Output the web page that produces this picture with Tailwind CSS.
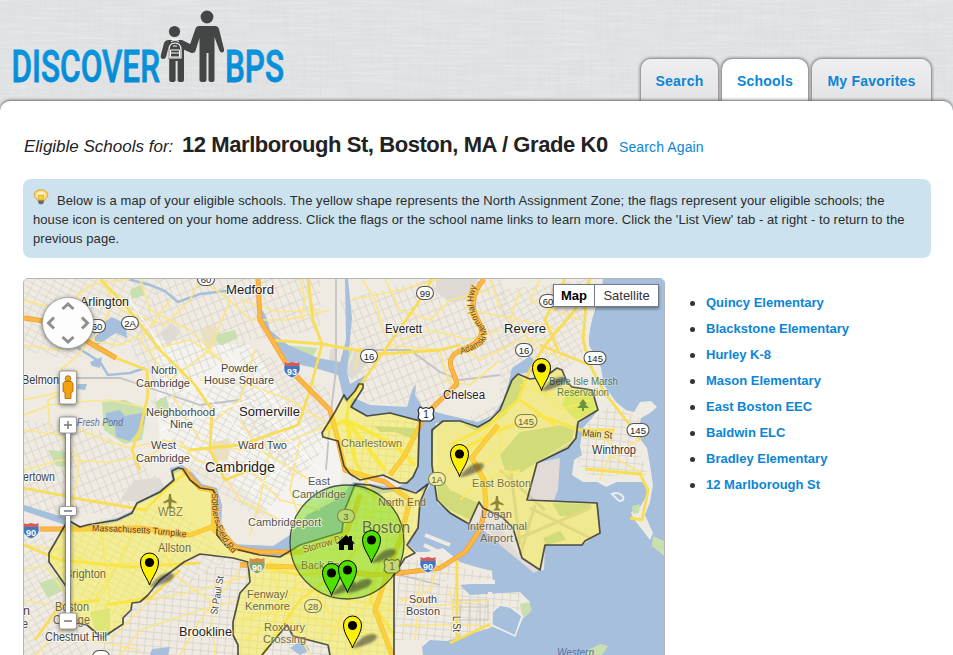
<!DOCTYPE html>
<html lang="en">
<head>
<meta charset="utf-8">
<title>Discover BPS</title>
<script src="https://cdn.jsdelivr.net/npm/@tailwindcss/browser@4"></script>
</head>
<body class="h-[655px] w-[953px] overflow-hidden bg-[#e0e1e3] font-['Liberation_Sans',Arial,sans-serif] text-[#222]">
<div class="relative h-[655px] overflow-hidden">
  <svg class="absolute inset-0" width="953" height="120">
    <defs>
      <filter id="lh" x="0" y="0" width="100%" height="100%"><feTurbulence type="fractalNoise" baseFrequency="0.02 0.4" numOctaves="2" seed="4"/><feColorMatrix values="0 0 0 0 1  0 0 0 0 1  0 0 0 0 1  1.6 0 0 0 -0.65"/></filter>
      <filter id="lv" x="0" y="0" width="100%" height="100%"><feTurbulence type="fractalNoise" baseFrequency="0.4 0.02" numOctaves="2" seed="9"/><feColorMatrix values="0 0 0 0 .68  0 0 0 0 .69  0 0 0 0 .71  1.4 0 0 0 -0.6"/></filter>
    </defs>
    <rect width="953" height="120" fill="#e0e1e3"/>
    <rect width="953" height="120" filter="url(#lh)" opacity=".35"/>
    <rect width="953" height="120" filter="url(#lv)" opacity=".5"/>
  </svg>

  <header class="relative flex h-[101px] items-end justify-between pr-[22px]">
    <svg class="self-start" width="300" height="98" viewBox="0 0 300 98">
      <defs><linearGradient id="lg" x1="0" y1="0" x2="0" y2="1"><stop offset="0" stop-color="#0a9ae0"/><stop offset="1" stop-color="#0386d2"/></linearGradient></defs>
      <g font-family="Roboto, sans-serif" font-weight="500" font-size="44.500" fill="url(#lg)" stroke="#0590da" stroke-width=".8">
        <text x="11.5" y="81.700" textLength="148.500" lengthAdjust="spacingAndGlyphs">DISCOVER</text>
        <text x="225" y="81.700" textLength="59" lengthAdjust="spacingAndGlyphs">BPS</text>
      </g>
      <g fill="#444645">
        <circle cx="207" cy="17" r="6.400"/>
        <path d="M199 26h16q3 0 4 3l5 20q.6 3-1.800 3.500-2 .3-3-2.500L214.500 37V80q0 2-3 2t-3-2V53h-2V80q0 2-3.500 2T199.500 80V38l-4 13q-1 2.500-4 2L181 48.500V43.500l8.500 2.500L195 30q1-4 4-4z"/>
        <circle cx="174.500" cy="31.500" r="5.600"/>
        <path d="M168 40h14l10 5v6L184 47.500V80q0 2-3.200 2t-3.200-2V61h-2V80q0 2-3.200 2t-3.200-2V59h-1V48.500l-2 8q-1 3-3.500 2.500t-1.800-4L164 43q1.500-3 4-3z"/>
      </g>
      <path d="M171 38.500l8 3m0-3l-8 3M169 58V50q0-7 6-7t6 7v8z" fill="#444645" stroke="#fff" stroke-width="1.200"/>
      <path d="M170.500 50h9v7h-9zM170.500 53h9M173 46h4" fill="none" stroke="#fff" stroke-width="1"/>
    </svg>
    <nav class="flex gap-[4px] text-[14px] font-bold leading-[44px] tracking-[0.2px] text-[#0b85d6]">
      <a class="h-[42px] w-[77px] rounded-t-[10px] bg-linear-to-b from-[#efeff1] to-[#e2e3e5] text-center shadow-[0_0_3px_1px_#777]">Search</a>
      <a class="h-[42px] w-[86px] rounded-t-[10px] bg-white text-center shadow-[0_0_3px_1px_#777]">Schools</a>
      <a class="h-[42px] w-[119px] rounded-t-[10px] bg-linear-to-b from-[#efeff1] to-[#e2e3e5] text-center shadow-[0_0_3px_1px_#777]">My Favorites</a>
    </nav>
  </header>

  <main class="relative h-[554px] rounded-t-[10px] bg-white px-[23px] pt-[28px] shadow-[0_-1px_3px_#666]">
    <div class="flex h-[31px] items-baseline">
      <span class="w-[159px] whitespace-nowrap pl-px text-[17px] italic leading-[31px]">Eligible Schools for:</span>
      <h1 class="w-[437px] whitespace-nowrap text-[22px] font-bold leading-[31px] tracking-[-0.43px]">12 Marlborough St, Boston, MA / Grade K0</h1>
      <a class="whitespace-nowrap text-[14px] tracking-[0.12px] text-[#0b85d6]">Search Again</a>
    </div>

    <div class="mt-[19px] h-[79px] w-[908px] rounded-[8px] bg-[#cce3ef] px-[10px] pt-[12px] text-[13px] leading-[19px] tracking-[0.063px] text-[#2b2b2b]">
      <p class="whitespace-nowrap"><svg class="-mt-[7px] mr-[8px] inline-block align-baseline" width="16" height="16" viewBox="0 0 16 16"><defs><radialGradient id="bulb"><stop offset="0" stop-color="#fff"/><stop offset=".55" stop-color="#fff3b4"/><stop offset="1" stop-color="#f4b83e"/></radialGradient></defs><path d="M8 .7c4.500 0 6.900 2.300 6.900 5.200 0 2.600-2.800 3.800-3.700 6H4.800C3.900 9.700 1.100 8.500 1.100 5.900 1.100 3 3.500.7 8 .7z" fill="url(#bulb)" stroke="#dc9c40" stroke-width=".7"/><path d="M5 6h6l-1 5H6z" fill="#f6cf35" stroke="#d99724" stroke-width=".6"/><path d="M5.200 11.500h5.600v2.200L9.500 15.300h-3L5.200 13.700z" fill="#66696d"/></svg>Below is a map of your eligible schools. The yellow shape represents the North Assignment Zone; the flags represent your eligible schools; the</p>
      <p class="whitespace-nowrap">house icon is centered on your home address. Click the flags or the school name links to learn more. Click the 'List View' tab - at right - to return to the</p>
      <p>previous page.</p>
    </div>

    <div class="mt-[20px] flex">
      <section class="relative h-[400px] w-[642px] shrink-0 overflow-hidden rounded-[5px] border border-[#b5b5b5] bg-[#efebe2]">
        <svg id="map" width="640" height="398" viewBox="24 279 640 398" font-family="Liberation Sans, Arial, sans-serif">
          <defs>
            <pattern id="s1" width="9" height="6" patternUnits="userSpaceOnUse" patternTransform="rotate(28)"><path d="M0 .5H9M.5 0V6" stroke="#dcd7ca" stroke-width=".8" fill="none"/></pattern>
            <pattern id="s2" width="7" height="10" patternUnits="userSpaceOnUse" patternTransform="rotate(-22)"><path d="M0 .5H7M.5 0V10" stroke="#d9d3c6" stroke-width=".8" fill="none"/></pattern>
            <pattern id="s3" width="6" height="8" patternUnits="userSpaceOnUse" patternTransform="rotate(60)"><path d="M0 .5H6M.5 0V8" stroke="#dad5c9" stroke-width=".8" fill="none"/></pattern>
            <pattern id="s4" width="8" height="7" patternUnits="userSpaceOnUse" patternTransform="rotate(5)"><path d="M0 .5H8M.5 0V7" stroke="#d8d2c5" stroke-width=".8" fill="none"/></pattern>
            <filter id="soft" x="-20%" y="-50%" width="140%" height="200%"><feGaussianBlur stdDeviation="1.200"/></filter>
            <g id="pin"><path d="M0 0C-1.500-6-9-14-9-23A9 9 0 1 1 9-23C9-14 1.500-6 0 0Z" stroke="#000" stroke-width="1"/><circle cy="-22.500" r="4.600" fill="#000"/></g>
            <path id="shade" d="M0 0C4-3 8-12 19-14C28-15 26-8 18-5C11-2 5 0 0 0Z" fill="#222" opacity=".5" filter="url(#soft)"/>
          </defs>

          <!-- land and street grids -->
          <rect x="24" y="279" width="640" height="398" fill="#efebe2"/>
          <path d="M155 340L250 345 300 420 345 450 340 490 290 530 230 480 160 450Z" fill="#f4f3f0"/>
          <path d="M24 279H160L140 340 70 360 24 350ZM150 400L240 380 300 470 260 520 190 470ZM60 530L170 500 230 560 120 620 80 600Z" fill="url(#s1)"/>
          <path d="M160 279H320V330L250 340 170 400 130 350ZM24 420L100 430 160 480 120 515 24 510ZM340 300L430 279H500L520 340 430 410 360 400Z" fill="url(#s2)"/>
          <path d="M240 340L330 390 330 440 300 480 240 430ZM500 290L590 279 585 350 540 400 500 410ZM24 530L60 540 90 655H24ZM440 430L530 390 540 460 480 500Z" fill="url(#s3)"/>
          <path d="M110 620L230 560 394 570V655H100ZM400 560H520V640H394ZM340 420H420V480H350ZM340 500L415 490 410 550 300 550ZM580 420L640 420 650 480H580Z" fill="url(#s4)"/>

          <!-- industrial and built-up patches -->
          <g fill="#dfdad3">
            <path d="M436 279H478L466 300 450 302 436 292ZM345 372L356 350 372 344 378 352 352 380ZM120 500L134 480 160 478 166 490 140 502ZM160 333L172 322 180 333 168 347ZM330 350L338 345 334 372 328 372Z"/>
            <path d="M537 465L560 465 555 500 527 500Z"/>
          </g>
          <path d="M200 330L214 325 220 342 206 348ZM212 443L230 438 228 460 214 462ZM300 520L330 512 328 526 300 534Z" fill="#eadfbe"/>

          <!-- parks -->
          <g fill="#c9dfaf">
            <path d="M102 402L125 400 147 410 142 440 124 444 104 430ZM48 450L72 452 72 468 56 466ZM39 583L60 576 64 590 48 598ZM285 345L318 348 312 358 292 357ZM342 356L353 349 345 372 338 373ZM90 612L110 608 110 636 95 630ZM130 290L142 284 145 295 132 299ZM214 335L235 330 238 338 220 346ZM404 410L418 400 425 412 410 413ZM155 402L166 396 170 410 158 414Z"/>
          </g>

          <!-- ocean, harbour and rivers -->
          <g fill="#a5bfdd">
            <path d="M603 279C601 300 589 318 589 345L596 367 606 380 620 405 600 425 560 470H527L537 463 568 448 560 420 592 390 600 400 613 385 600 350 664 279V677H422L423 655 422 647 430 640 447 641 470 634 493 627 515 636 523 618 530 612V602L520 592 470 595 460 585 493 582 492 572 460 562 443 548 427 552 416 552 408 544 418 528 420 502 430 485 417 480 418 421 424 410 434 424 432 465 437 500 469 524 479 502 513 528 540 570 545 545 582 545 600 533 597 503 527 500 537 465 568 448 590 400Z"/>
            <path d="M664 279H603C601 300 589 318 589 345L598 373 600 395 615 405 664 405ZM570 430L600 430 600 482H540L537 463Z"/>
            <path d="M256 300L266 316 270 330 288 345 318 358 340 362 346 340 345 279H348L352 318 347 372 350 384 366 375 352 397 370 405 407 407 412 390 416 384 415 395 423 408 443 414 478 422 493 415 505 398 512 368 530 356 545 372 557 368 530 379 518 374 508 390 500 410 478 427 460 421 436 423 430 445 418 445 420 421 390 413 367 416 351 407 344 400 338 375 315 368 288 362 276 345 262 325Z"/>
            <path d="M24 505L60 516 80 526 117 518 134 510 138 502 160 490 172 480 170 468 182 465 192 472 202 484 217 488 222 505 221 532 232 544 273 546 290 535 307 515 340 498 353 482 372 484 397 488 411 478 418 466 432 480 424 492 405 490 372 495 356 487 344 512 342 532 300 545 280 557 227 548 216 535 214 492 198 489 183 470 174 473 174 481 160 494 137 505 132 515 117 522 80 530 24 511Z"/>
            <path d="M92 323L104 322 112 317 126 324 127 338 116 333 108 338 96 346ZM90 362L102 357 100 368 92 366ZM78 384L87 384 85 390 77 389ZM106 413L120 410 125 416 146 412 144 424 130 441 116 437 115 426 106 420ZM152 649L170 647 168 655H150ZM290 648L302 640 310 650 300 655Z"/>
          </g>
          <path d="M128 279L150 285 165 291 178 302 200 294 225 291 256 292 M78 348L100 362 108 375 130 373 145 368" stroke="#a5bfdd" stroke-width="2.500" fill="none"/>

          <!-- Logan, Winthrop and harbour islands -->
          <path d="M437 425L460 421 478 427 500 410 518 374 557 368 572 387 592 390 598 410 576 425 575 440 537 463 527 500 597 503 600 533 582 545 545 545 544 570 538 571 520 558 483 530 469 524 437 503Z" fill="#e9e4d9"/>
          <path d="M537 463L560 458 558 490 554 500 527 500ZM479 518L500 528 520 558 542 569 534 573 500 545Z" fill="#e1dad6"/>
          <path d="M589 345L601 368 604 385 616 402 626 410 634 412 640 402 651 401 657 407 650 413 641 418 637 435 647 448 650 465 653 485 650 502 645 515 653 533 650 540 640 527 633 518 631 512 640 507 648 493 643 482 617 482 606 487 597 482 583 482 572 475 574 460 582 455 580 446 583 428 592 418 598 410 592 390 572 387Z" fill="#eeebe3"/>
          <path d="M586 425L610 405 640 418 636 445 648 475 590 476 578 462Z" fill="url(#s4)"/>
          <path d="M612 494C618 491 625 496 623 500C618 503 617 498 612 494Z" fill="#a5bfdd" stroke="#eee" stroke-width="2"/>
          <path d="M632 506L640 504 639 513 633 514ZM653 536L664 541V556L652 546ZM520 604L529 602 532 610 524 618 521 612ZM588 650L600 644 608 646 602 655H586Z" fill="#c9dfaf"/>
          <!-- marsh and shoreline greens -->
          <path d="M568 388L590 392 597 410 576 420 562 405Z" fill="#c6e08a"/>
          <path d="M500 455L520 432 545 428 560 425 574 430 572 440 537 462 522 472 505 470ZM508 385L518 375 524 380 520 395 505 415 478 432 462 424 478 427 500 412ZM552 503L590 504 592 508 576 516 560 516ZM543 538L560 531 566 540 546 545ZM437 470L450 490 478 503 470 520 450 510 438 500ZM374 426L415 428 416 440 395 432 380 432Z" fill="#b5cbb0"/>
          <path d="M510 607L500 605 492 612 492 625 515 636 522 616Z" fill="#a5bfdd" stroke="#f1eee6" stroke-width="1.500"/>
          <path d="M490 592V596M450 563L492 573M446 582H495M425 535L450 545M424 545L445 555" stroke="#efebe2" stroke-width="4" fill="none"/>
          <path d="M452 600H488V620H452M452 607H488M460 600V640M470 600V632M480 600V627" stroke="#c9c5bd" stroke-width="1" fill="none"/>

          <!-- railways -->
          <path d="M336 279L336 370 330 420 326 470M60 378H120L150 388 200 405 240 400M372 350L410 350 440 372 460 380 500 375M400 575L440 585" stroke="#c3c3c3" stroke-width="1.800" fill="none"/>
          <path d="M500 470L545 510M530 508L590 538M515 540L590 508M535 505L520 555M510 465L520 545" stroke="#cfc6bb" stroke-width="3" fill="none"/>

          <!-- secondary roads -->
          <g fill="none" stroke="#fae588" stroke-width="1.700" stroke-linejoin="round">
            <path d="M24 300L60 310 90 285 130 279M24 345L55 350 80 340 120 345 140 335M60 370L75 358 100 330 115 300M24 400L60 392 78 370M24 415L50 405 78 402 110 400 148 408M35 655L50 640 90 640 140 650M24 430L60 435 80 460 70 520M50 430L48 400 70 390M80 430L105 440 130 448 165 440 190 450M24 470L60 460 110 462 150 455 175 440M24 545L60 550 95 565 145 563 190 565M24 570L45 565 70 600 60 640M100 520L105 560 110 600M140 515L120 560 95 600M140 279L150 310 190 330 220 360M100 279L120 310 165 325 190 300 200 279M170 300L140 340 170 380 210 350 230 300M200 279L230 300 250 320 285 320 330 310M150 350L190 340 220 360 235 375M200 380L250 385 290 400 330 425M172 395L200 440 240 450 290 440 330 425M240 300L280 312 320 310M255 350L240 400 215 420M300 320L305 300 300 279M350 300L400 290 440 279M362 279L375 300 385 335M385 279L400 310 430 320 450 300 490 290M400 340L430 330 470 340 500 330M360 345L355 370M390 345L440 350 445 370 460 400M460 345L480 360 520 340 550 340M440 380L470 385 500 360M470 310L520 320 560 330M520 290L510 320 540 350 565 360M540 279L530 300 580 320M490 279L500 310M24 600L50 605M110 640L150 600 200 590 250 575M120 655L140 630 200 610 240 600M180 655L200 620 240 570M160 545L180 580 210 600 215 655M250 600L300 590 350 600 394 610M240 620L280 610 330 625 394 640M270 560L280 600 310 655M310 560L320 600 350 640 360 655M245 640L270 625 300 580M340 555L350 600 330 640M380 590L350 625 350 655M400 600L440 605 490 600M400 625H480M420 580L415 640M450 590L457 640M440 560L430 590 400 600M250 470L280 500 320 510M270 450L260 500 250 535M220 470L240 500 290 525M240 420L260 450 310 480M180 440L195 460 230 470M300 440L290 490 300 520M350 520L380 510 400 500M360 490L375 530 405 545M440 480L480 440 500 410M445 450L480 465 500 450 500 430M460 500L480 480 520 470M520 385L550 395 575 390M530 380L560 410 590 400M590 430L620 450 640 440M600 480L610 455 645 475"/>
          </g>
          <g fill="none" stroke="#fff" stroke-width="1"><path d="M160 430L250 400 320 470M180 370L280 470M220 345L290 420M250 490L330 440M130 300L190 390"/></g>

          <!-- main roads -->
          <g fill="none" stroke="#f9dd55" stroke-width="2.800" stroke-linejoin="round">
            <path d="M116 358L147 370 148 395 140 430 132 450 140 470M100 279L125 305 160 350 195 385 212 410 210 450 225 480 250 470"/>
            <path d="M308 279L313 320 322 344 310 390 298 425 240 445 190 450M270 340L322 344 355 350 382 354 440 350 460 345M382 354L420 300 432 279M382 354L350 400 346 420 355 460 375 500"/>
            <path d="M24 488L60 495 85 500 145 510 170 485 190 470M590 279L575 310 545 345 530 370 518 400 490 425 450 445M540 345L590 365M565 279L545 320 558 350M587 290L583 340 590 365 604 392 630 425 640 440M460 450L500 430 540 415 580 430 615 430M520 400L555 425"/>
            <path d="M242 563L300 575 345 570 394 575M262 655L300 600 340 570 360 545M394 635L370 600 380 560M24 545L60 560 130 567 200 563M100 600L60 605 35 640M105 605L150 598 180 570M585 469L640 474 648 490 642 520 630 518M450 643L490 624M457 560V640"/>
            <path d="M346 420L355 460M346 420L325 430M346 420L395 445 415 465M346 420L385 470" stroke-width="4" stroke="#fbe34e"/>
          </g>

          <!-- motorways -->
          <g fill="none" stroke="#f0a030" stroke-width="5" stroke-linejoin="round">
            <path d="M258 279L260 320 290 370 330 410 338 440 345 470 385 482 410 500 400 540 385 580 375 610 394 660"/>
            <path d="M24 318L50 322 85 340 116 358"/>
            <path d="M24 529L80 529 140 528 190 535 217 525 235 548 260 552 300 552 345 535 355 510 360 495"/>
            <path d="M240 565L320 568 370 575 400 573 440 568 465 552 480 530 486 505 484 480 472 458"/>
            <path d="M484 279Q466 300 478 320T462 350Q446 356 452 370T456 385L425 415 405 455 390 475"/>
            <path d="M183 469L200 488 213 490 214 530 240 550M498 425L470 460"/>
          </g>
          <g fill="none" stroke="#fdb843" stroke-width="3.600" stroke-linejoin="round">
            <path d="M258 279L260 320 290 370 330 410 338 440 345 470 385 482 410 500 400 540 385 580 375 610 394 660M24 318L50 322 85 340 116 358M24 529L80 529 140 528 190 535 217 525 235 548 260 552 300 552 345 535 355 510 360 495M240 565L320 568 370 575 400 573 440 568 465 552 480 530 486 505 484 480 472 458M484 279Q466 300 478 320T462 350Q446 356 452 370T456 385L425 415 405 455 390 475M183 469L200 488 213 490 214 530 240 550M498 425L470 460"/>
          </g>

          <!-- assignment zone -->
          <g fill="#f8f032" fill-opacity=".44" stroke="#1e1e1e" stroke-opacity=".75" stroke-width="1.700" stroke-linejoin="round">
            <path d="M432 465V430L443 421H460L478 427 490 420 500 410 508 390 512 380 518 374 530 379 545 377 557 368 562 370 567 382 572 387 592 390 598 410 578 422 576 438 568 448 537 463 527 500 597 503 600 533 585 541 582 545H545L540 570 522 558 513 528 502 517 483 508 479 502 469 524 450 513 437 500Z"/>
            <path d="M344 466L338 441 323 437 322 433 335 412 344 395 347 400 355 391 359 384 363 384V388L351 407 367 416 390 413 420 421 419 435 418 466 413 477 407 483 400 483 383 475 360 480 350 474ZM355 484L370 485 383 489 400 488 416 493 428 484 420 502 418 528 407 545 415 553 405 558 394 575V680H330V655L328 645 293 636 287 625 276 638 262 655V680H238V645L233 635V622L240 593 250 582 248 562 233 558 200 554 184 562 160 580 148 595 140 602 132 603 131 610 123 618 123 624 102 638 87 625 70 622V592L49 562V553L68 520 80 527 87 525 117 520 132 513 137 503 160 492 174 480 172 471 178 468 183 469 190 480 200 488 213 490 217 498V535L227 547 260 555 280 557 300 545 342 532 344 512Z"/>
          </g>
          <circle cx="347" cy="542" r="57" fill="#74dc16" fill-opacity=".48" stroke="#222" stroke-opacity=".75" stroke-width="1.300"/>

          <g id="labels"></g>
          <g id="shields"></g>

          <path d="M583 399l4 5h-2l4 4h-5v3h-2v-3h-5l4-4h-2z" fill="#6b9440"/>
          <g fill="#8b8538"><path id="pl" d="M169 494h2l.6 5 5 3v1.500l-5-1.500-.4 4 2 1.500v1h-6.400v-1l2-1.500-.4-4-5 1.500V502l5-3z"/><use href="#pl" transform="translate(327 2)"/></g>

          <!-- home -->
          <path d="M337 543.500L346 535l3 2.500V536h3v4.500l3 3h-2V550h-5v-5h-4v5h-5v-6.500z" fill="#000"/>

          <!-- school pins -->
          <use href="#shade" x="541" y="391"/><use href="#shade" x="459" y="477"/><use href="#shade" x="149" y="587"/><use href="#shade" x="352" y="648"/><use href="#shade" x="371" y="563"/><use href="#shade" x="347" y="593"/><use href="#shade" x="331" y="595"/>
          <g fill="#fdf000"><use href="#pin" x="541.500" y="390.500"/><use href="#pin" x="459.500" y="476.500"/><use href="#pin" x="149.500" y="585"/><use href="#pin" x="352.500" y="648"/></g>
          <g fill="#4fe000"><use href="#pin" x="371.500" y="562.500"/><use href="#pin" x="331.500" y="595.500"/><use href="#pin" x="347.500" y="592.500"/></g>

          <!-- pan, street-view and zoom controls -->
          <g filter="drop-shadow(0 1px 2px #0008)">
            <circle cx="68" cy="323" r="25.500" fill="#fdfdfd" stroke="#999" stroke-width=".7"/>
            <rect x="59.500" y="371" width="17" height="33" rx="2" fill="#fafafa" stroke="#888" stroke-width=".8"/>
            <rect x="65.500" y="430" width="5" height="186" fill="#fff" stroke="#777" stroke-width=".8"/>
            <rect x="59.500" y="417" width="17" height="16" rx="2" fill="#fff" stroke="#888" stroke-width=".8"/>
            <rect x="59.500" y="613" width="17" height="16" rx="2" fill="#fff" stroke="#888" stroke-width=".8"/>
            <rect x="59.500" y="506.500" width="17" height="9" rx="2" fill="#fff" stroke="#888" stroke-width=".8"/>
          </g>
          <g fill="none" stroke="#8e8e8e" stroke-width="3"><path d="M62.500 309l5.500-5 5.500 5M62.500 337l5.500 5 5.500-5M54 317.500l-5.500 5.500 5.500 5.500M82 317.500l5.500 5.500-5.500 5.500"/></g>
          <path d="M64 425h8M68 421v8M64 621h8M64 511h8" stroke="#777" stroke-width="1.500"/>
          <g fill="#f3a20f" stroke="#a86306" stroke-width=".8"><path d="M64.500 381.500h7l1.500 2v8l-2 1v6h-6v-6l-2-1v-8z"/><circle cx="68" cy="378.500" r="2.800"/></g>
        </svg>
        <div class="absolute right-[5px] top-[5px] flex h-[23px] w-[106px] border border-[#717b87] bg-white text-center text-[13px] leading-[21px] text-[#333] shadow-[0_2px_3px_rgba(0,0,0,0.4)]">
          <span class="w-[41px] border-r border-[#717b87] font-bold text-black">Map</span>
          <span class="flex-1">Satellite</span>
        </div>
      </section>

      <ul class="ml-[25px] mt-[12px] text-[13px] font-bold leading-[26px] text-[#0b85d6]">
        <li class="flex items-center gap-[11px]"><i class="size-[5px] rounded-full bg-[#333]"></i><a>Quincy Elementary</a></li>
        <li class="flex items-center gap-[11px]"><i class="size-[5px] rounded-full bg-[#333]"></i><a>Blackstone Elementary</a></li>
        <li class="flex items-center gap-[11px]"><i class="size-[5px] rounded-full bg-[#333]"></i><a>Hurley K-8</a></li>
        <li class="flex items-center gap-[11px]"><i class="size-[5px] rounded-full bg-[#333]"></i><a>Mason Elementary</a></li>
        <li class="flex items-center gap-[11px]"><i class="size-[5px] rounded-full bg-[#333]"></i><a>East Boston EEC</a></li>
        <li class="flex items-center gap-[11px]"><i class="size-[5px] rounded-full bg-[#333]"></i><a>Baldwin ELC</a></li>
        <li class="flex items-center gap-[11px]"><i class="size-[5px] rounded-full bg-[#333]"></i><a>Bradley Elementary</a></li>
        <li class="flex items-center gap-[11px]"><i class="size-[5px] rounded-full bg-[#333]"></i><a>12 Marlborough St</a></li>
      </ul>
    </div>
  </main>
</div>
<script>
const NS = 'http://www.w3.org/2000/svg';
function add(parent, tag, attrs, text) {
  const e = document.createElementNS(NS, tag);
  for (const k in attrs) e.setAttribute(k, attrs[k]);
  if (text) e.textContent = text;
  parent.appendChild(e);
  return e;
}
const L = document.getElementById('labels');
// text, left, baseline, width, size, colour, rotation
[
 ['Arlington',80,306,49,12.5,'#222'],['Medford',226,294,48,12.5,'#222'],['Everett',385,333,37,12,'#222'],
 ['Revere',504,333,42,12.5,'#222'],['Chelsea',443,399,42,12,'#222'],['Winthrop',592,454,44,12,'#333'],
 ['Somerville',239,416,61,12.5,'#222'],['Cambridge',205,472,70,14,'#222'],['Belmon',22,384,37,12,'#333'],
 ['North',151,374,26,11.5,'#444'],['Cambridge',136,387,54,11.5,'#444'],['Powder',221,372,37,11.5,'#444'],
 ['House Square',204,384,70,11.5,'#444'],['Neighborhood',146,416,69,11.5,'#444'],['Nine',170,428,23,11.5,'#444'],
 ['West',151,449,25,11.5,'#444'],['Cambridge',136,462,54,11.5,'#444'],['Ward Two',238,449,49,11.5,'#444'],
 ['ertown',23,481,32,12,'#444'],['Charlestown',341,447,61,11.5,'#7a763f'],['East',308,485,22,11.5,'#555'],
 ['Cambridge',292,498,54,11.5,'#5c6b4a'],['Cambridgeport',248,526,73,11.5,'#555'],['North End',378,506,48,11.5,'#6e6a3c'],
 ['Boston',362,533,48,16,'#66702c'],['WBZ',158,516,25,12,'#8b8538'],['Allston',158,552,33,12,'#6e6a3c'],
 ['Brighton',65,578,41,12,'#6e6a3c'],['Boston',55,611,34,12,'#6e6a3c'],['College',53,624,37,12,'#6e6a3c'],
 ['Chestnut Hill',45,641,62,12,'#444'],['Brookline',179,636,53,12.5,'#222'],['Back Bay',301,569,44,11.5,'#68802c'],
 ['Fenway/',247,598,41,11.5,'#6e6a3c'],['Kenmore',245,610,45,11.5,'#6e6a3c'],['Roxbury',264,631,41,11.5,'#6e6a3c'],
 ['Crossing',263,643,43,11.5,'#6e6a3c'],['South',409,603,28,11.5,'#444'],['Boston',406,615,34,11.5,'#444'],
 ['East Boston',472,487,59,11.5,'#7a763f'],['Logan',481,518,31,11.5,'#6d6856'],['International',467,530,60,11.5,'#6d6856'],
 ['Airport',480,542,33,11.5,'#6d6856'],['Belle Isle Marsh',549,385,69,11,'#4f7466'],['Reservation',557,396,52,11,'#5c7f45'],
 ['n',23,615,7,12,'#444'],['e',22,628,6,12,'#444'],
 ['St Paul St',217,615,39,10,'#444',-80],['L St',453,616,16,10,'#444',90],
 ['Main St',582,436,30,10,'#444',5],['Storrow Dr',304,553,42,10.5,'#7c6c25',-16]
].forEach(([t,x,y,w,s,c,r]) => {
  const light = c === '#222' || c === '#333' || c === '#444' || c === '#555';
  add(L,'text',{x,y,textLength:w,lengthAdjust:'spacingAndGlyphs','font-size':s,fill:c,stroke:t==='Main St'?'#fbe68a':light?'#ffffffb0':'#fffff040','stroke-width':2.2,'stroke-linejoin':'round','paint-order':'stroke',...(r?{transform:`rotate(${r} ${x} ${y})`}:{})},t);
});
[['Fresh Pond',77,426,46,10],['Western',557,656,37,10.5]].forEach(([t,x,y,w,s]) =>
  add(L,'text',{x,y,textLength:w,lengthAdjust:'spacingAndGlyphs','font-size':s,'font-style':'italic',fill:'#5674a0'},t));
// road names that follow their motorway
[['p1','M92 531Q150 532 190 538','Massachusetts Turnpike',94],['p2','M212 493Q210 535 238 558','Soldiers Field Rd',66],['p3','M461 354Q496 344 483 325Q464 305 484 270','Adamski Memorial Hwy',86]].forEach(([id,d,t,w]) => {
  add(L,'path',{id,d,fill:'none'});
  const e = add(L,'text',{'font-size':9,fill:'#604410',stroke:'#fcc65c','stroke-width':1.5,'paint-order':'stroke'});
  add(e,'textPath',{href:'#'+id,textLength:w,lengthAdjust:'spacingAndGlyphs'},t);
});
const S = document.getElementById('shields');
[['60',206,279,'#fff'],['99',425,293,'#fff'],['60',97,326,'#fff'],['2A',130,323,'#fff'],['16',369,356,'#fff'],['16',524,350,'#fff'],['60',548,301,'#fff'],['145',595,358,'#fff'],['145',526,421,'#f2eda0'],['145',638,430,'#fff'],['1A',437,479,'#f0eda5'],['3',346,516,'#b8db70'],['28',313,606,'#f2eda0'],['9',101,657,'#fff']].forEach(([t,x,y,f]) => {
  const w = t.length > 2 ? 22 : 17;
  add(S,'rect',{x:x-w/2,y:y-6.5,width:w,height:13,rx:6.5,fill:f,stroke:f==='#fff'?'#555':'#858448','stroke-width':1.1});
  add(S,'text',{x,y:y+3.5,'text-anchor':'middle','font-size':9.5,fill:f==='#fff'?'#222':'#66652e'},t);
});
[[426,414,'#fff','#222'],[392,566,'#c7d870','#697628']].forEach(([x,y,f,c]) => {
  add(S,'path',{d:`M${x-6} ${y-7}l3 1.500 3-1 3 1 3-1.500 2 3-1 4 1 4-3 3h-10l-3-3 1-4-1-4z`,fill:f,stroke:c,'stroke-width':1.1});
  add(S,'text',{x,y:y+4,'text-anchor':'middle','font-size':10,fill:c},'1');
});
[['93',292,370,'#4079bd','#d35b59'],['90',31,531,'#4079bd','#d35b59'],['90',428,565,'#4079bd','#d35b59'],['90',257,566,'#8ba369','#d98a40']].forEach(([t,x,y,b,r]) => {
  add(S,'path',{d:`M${x-7} ${y-7}h14q3 7-1 11-3 3-6 4-3-1-6-4-4-4-1-11z`,fill:b,stroke:'#fff','stroke-width':.8});
  add(S,'path',{d:`M${x-7.5} ${y-8}l3 1 4.500-1 4.500 1 3-1v4h-15z`,fill:r});
  add(S,'text',{x,y:y+4.5,'text-anchor':'middle','font-size':9,'font-weight':'bold',fill:'#fff'},t);
});
</script>
</body>
</html>
